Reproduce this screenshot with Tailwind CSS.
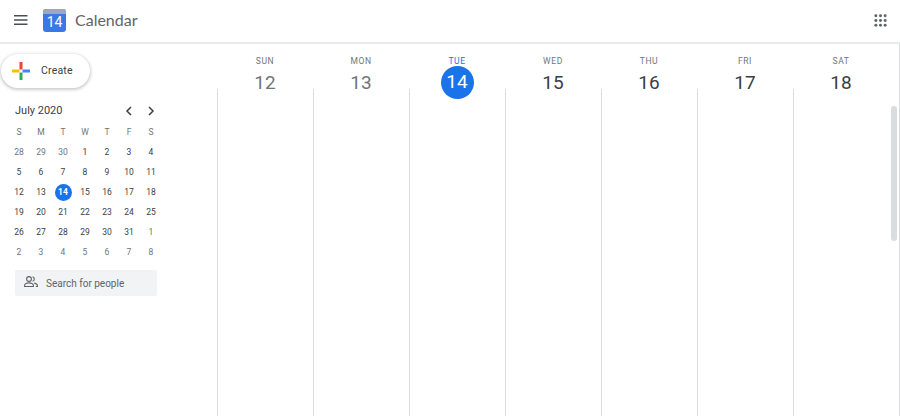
<!DOCTYPE html>
<html lang="en">
<head>
  <meta charset="UTF-8" />
  <title>Calendar</title>
  <script src="https://cdn.jsdelivr.net/npm/@tailwindcss/browser@4"></script>
</head>
<body class="h-[416px] w-[900px] overflow-hidden bg-white font-['Roboto',sans-serif] text-[#3c4043]">
  <header class="flex h-[44px] items-center border-b-2 border-[#e8eaed] pb-[2px]">
    <svg class="ml-[12px] h-[18px] w-[18px]" viewBox="0 0 18 18" fill="#4b4f54"><path d="M2 4h13.500v1.500H2zM2 8.250h13.500v1.500H2zM2 12.500h13.500V14H2z"/></svg>
    <div class="relative ml-[13px] flex h-[23px] w-[23px] items-end justify-center overflow-hidden rounded-[3px] bg-[#3b78e7]">
      <div class="absolute inset-x-0 top-0 h-[5px] bg-[#9aa8c0]"></div>
      <span class="relative text-[14px] leading-[20px] text-white">14</span>
    </div>
    <span class="ml-[9px] font-['Lato',sans-serif] text-[16px] text-[#5f6368]">Calendar</span>
    <svg class="ml-auto mr-[13px] h-[13px] w-[13px]" viewBox="0 0 14 14" fill="#5f6368">
      <circle cx="2" cy="2" r="1.600"/><circle cx="7" cy="2" r="1.600"/><circle cx="12" cy="2" r="1.600"/>
      <circle cx="2" cy="7" r="1.600"/><circle cx="7" cy="7" r="1.600"/><circle cx="12" cy="7" r="1.600"/>
      <circle cx="2" cy="12" r="1.600"/><circle cx="7" cy="12" r="1.600"/><circle cx="12" cy="12" r="1.600"/>
    </svg>
  </header>

  <div class="flex h-[372px]">
    <aside class="w-[217px] shrink-0">
      <button class="ml-[1px] mt-[10px] flex h-[34px] w-[89px] items-center rounded-full bg-white pl-[11px] shadow-[0_1px_3px_1px_rgba(60,64,67,0.25)]">
        <svg class="h-[18px] w-[18px]" viewBox="0 0 18 18">
          <path fill="#ea4335" d="M7.500 0h3v7.500h-3z"/>
          <path fill="#4285f4" d="M10.500 7.500H18v3h-7.500z"/>
          <path fill="#34a853" d="M7.500 10.500h3V18h-3z"/>
          <path fill="#fbbc05" d="M0 7.500h7.500v3H0z"/>
        </svg>
        <span class="ml-[11px] text-[10.5px] tracking-[0.2px]">Create</span>
      </button>

      <div class="ml-[15px] mt-[14px] flex h-[18px] items-center">
        <span class="w-[108px] text-[11px]">July 2020</span>
        <svg class="h-[12px] w-[12px]" viewBox="0 0 12 12" fill="none" stroke="#3c4043" stroke-width="1.500"><path d="M8 2 4 6l4 4"/></svg>
        <svg class="ml-[10px] h-[12px] w-[12px]" viewBox="0 0 12 12" fill="none" stroke="#3c4043" stroke-width="1.500"><path d="m4 2 4 4-4 4"/></svg>
      </div>

      <div class="ml-[8px] mt-[2px] grid w-[154px] grid-cols-7 text-center text-[8.5px] leading-[20px]">
        <span class="text-[#70757a]">S</span><span class="text-[#70757a]">M</span><span class="text-[#70757a]">T</span><span class="text-[#70757a]">W</span><span class="text-[#70757a]">T</span><span class="text-[#70757a]">F</span><span class="text-[#70757a]">S</span>
        <span class="text-[#70757a]">28</span><span class="text-[#70757a]">29</span><span class="text-[#70757a]">30</span><span>1</span><span>2</span><span>3</span><span>4</span>
        <span>5</span><span>6</span><span>7</span><span>8</span><span>9</span><span>10</span><span>11</span>
        <span>12</span><span>13</span><span class="flex h-[20px] items-center justify-center"><span class="flex h-[17px] w-[17px] items-center justify-center rounded-full bg-[#1a73e8] font-bold text-white">14</span></span><span>15</span><span>16</span><span>17</span><span>18</span>
        <span>19</span><span>20</span><span>21</span><span>22</span><span>23</span><span>24</span><span>25</span>
        <span>26</span><span>27</span><span>28</span><span>29</span><span>30</span><span>31</span><span class="text-[#70757a]">1</span>
        <span class="text-[#70757a]">2</span><span class="text-[#70757a]">3</span><span class="text-[#70757a]">4</span><span class="text-[#70757a]">5</span><span class="text-[#70757a]">6</span><span class="text-[#70757a]">7</span><span class="text-[#70757a]">8</span>
      </div>

      <div class="ml-[15px] mt-[8px] flex h-[26px] w-[142px] items-center rounded-[2px] bg-[#f1f3f4] pt-[1px]">
        <svg class="ml-[9px] -mt-[3px] h-[14px] w-[14px]" viewBox="0 0 14 14" fill="none" stroke="#5f6368" stroke-width="1.100">
          <circle cx="5" cy="4" r="2.400"/>
          <path d="M.6 11.500v-1C.6 8.900 3 7.900 5 7.900s4.400 1 4.400 2.600v1z"/>
          <path d="M8.600 1.700a2.400 2.400 0 0 1 0 4.600M10.200 8.100c1.700.4 3.200 1.200 3.200 2.400v1h-1.600"/>
        </svg>
        <span class="ml-[8px] text-[10px] text-[#5f6368]">Search for people</span>
      </div>
    </aside>

    <main class="relative flex-1 border-r border-[#dadce0]">
      <div class="grid h-full w-[672px] grid-cols-7">
        <div class="flex flex-col"><div class="h-[45px] pt-[10px] text-center"><div class="text-[8.5px] leading-[14px] tracking-[0.6px] text-[#70757a]">SUN</div><div class="text-[19px] leading-[30px] text-[#70757a]">12</div></div><div class="flex-1 border-l border-[#dadce0]"></div></div>
        <div class="flex flex-col"><div class="h-[45px] pt-[10px] text-center"><div class="text-[8.5px] leading-[14px] tracking-[0.6px] text-[#70757a]">MON</div><div class="text-[19px] leading-[30px] text-[#70757a]">13</div></div><div class="flex-1 border-l border-[#dadce0]"></div></div>
        <div class="flex flex-col"><div class="flex h-[45px] flex-col items-center pt-[10px]"><div class="text-[8.5px] leading-[14px] tracking-[0.6px] text-[#1a73e8]">TUE</div><div class="-mt-[2px] flex h-[33px] w-[33px] shrink-0 items-center justify-center rounded-full bg-[#1a73e8] text-[19px] text-white">14</div></div><div class="flex-1 border-l border-[#dadce0]"></div></div>
        <div class="flex flex-col"><div class="h-[45px] pt-[10px] text-center"><div class="text-[8.5px] leading-[14px] tracking-[0.6px] text-[#70757a]">WED</div><div class="text-[19px] leading-[30px]">15</div></div><div class="flex-1 border-l border-[#dadce0]"></div></div>
        <div class="flex flex-col"><div class="h-[45px] pt-[10px] text-center"><div class="text-[8.5px] leading-[14px] tracking-[0.6px] text-[#70757a]">THU</div><div class="text-[19px] leading-[30px]">16</div></div><div class="flex-1 border-l border-[#dadce0]"></div></div>
        <div class="flex flex-col"><div class="h-[45px] pt-[10px] text-center"><div class="text-[8.5px] leading-[14px] tracking-[0.6px] text-[#70757a]">FRI</div><div class="text-[19px] leading-[30px]">17</div></div><div class="flex-1 border-l border-[#dadce0]"></div></div>
        <div class="flex flex-col"><div class="h-[45px] pt-[10px] text-center"><div class="text-[8.5px] leading-[14px] tracking-[0.6px] text-[#70757a]">SAT</div><div class="text-[19px] leading-[30px]">18</div></div><div class="flex-1 border-l border-[#dadce0]"></div></div>
      </div>
      <div class="absolute right-[2px] top-[62px] h-[135px] w-[6px] rounded-full bg-[#dadce0]"></div>
    </main>
  </div>
</body>
</html>
